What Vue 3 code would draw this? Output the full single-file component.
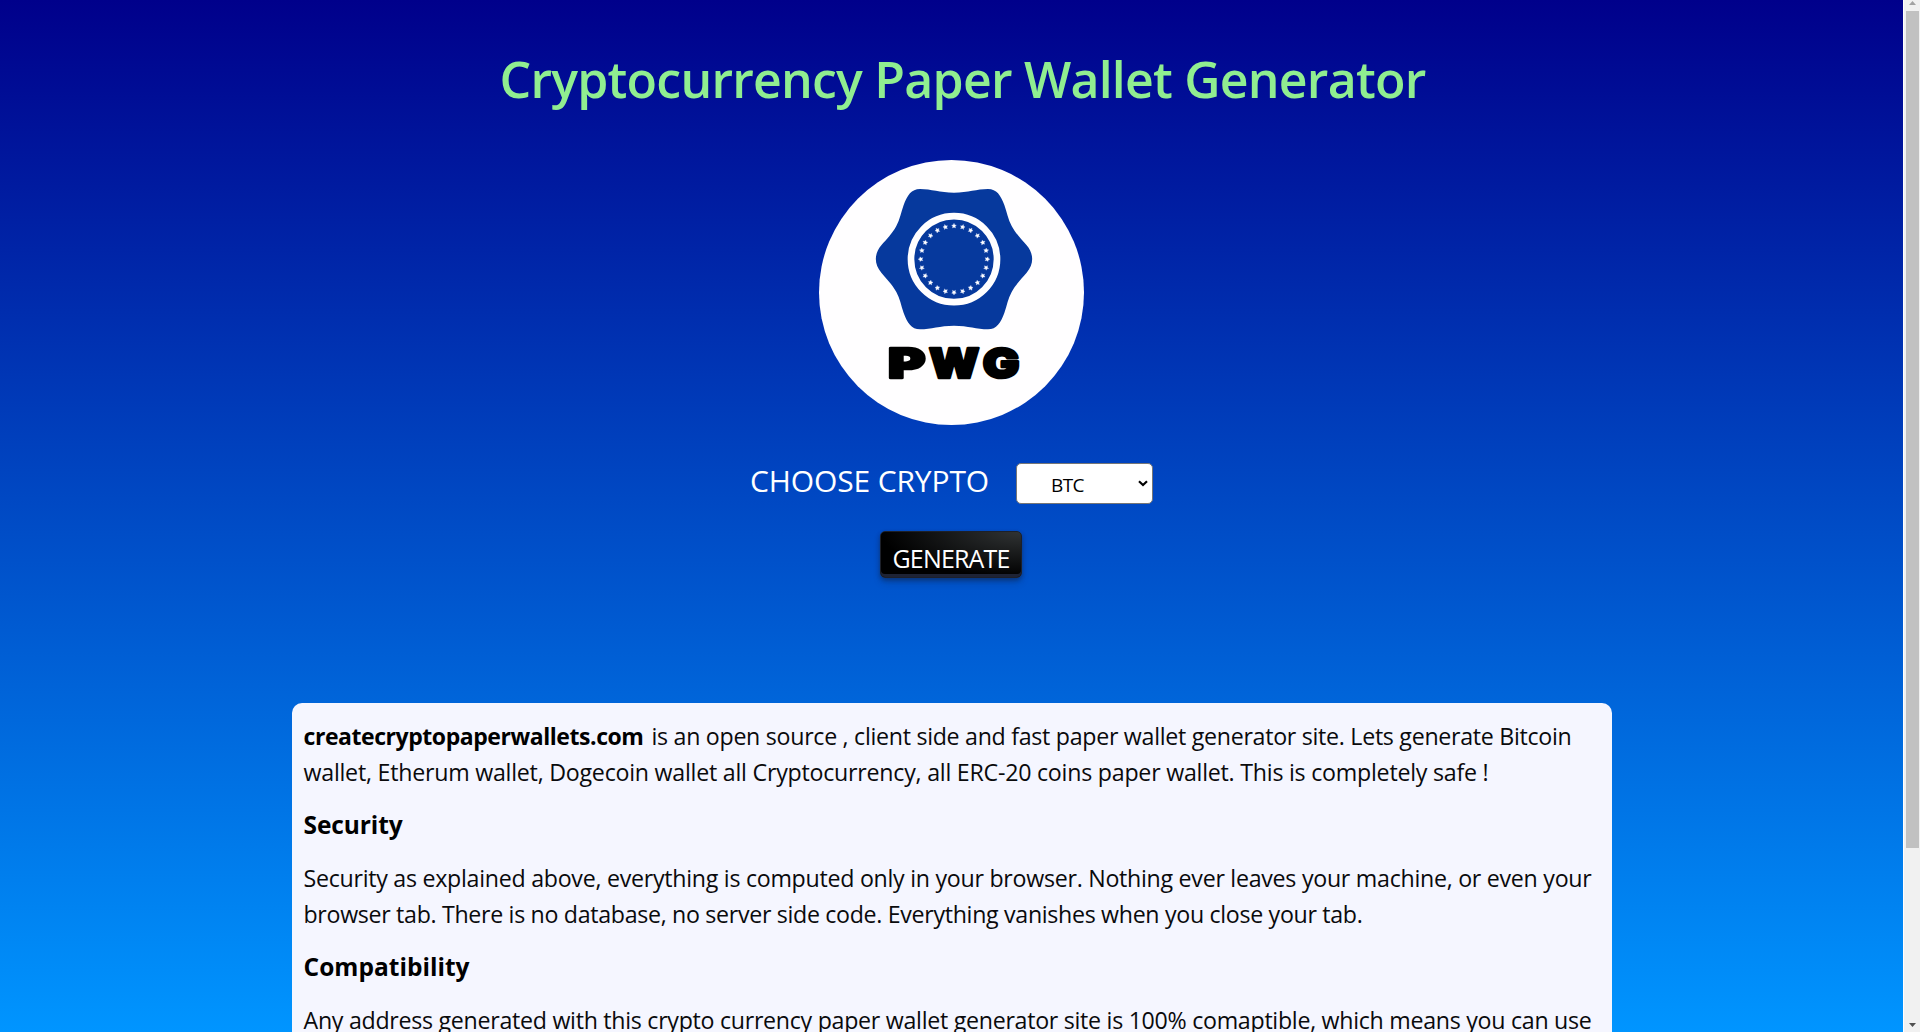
<script setup>
const stars = Array.from({ length: 24 }, (_, i) => i * 15)

const sections = [
  {
    lines: [
      [{ text: 'createcryptopaperwallets.com', width: 340, bold: true }, { text: 'is an open source , client side and fast paper wallet generator site. Lets generate Bitcoin', width: 920 }],
      [{ text: 'wallet, Etherum wallet, Dogecoin wallet all Cryptocurrency, all ERC-20 coins paper wallet. This is completely safe !', width: 1185 }],
    ],
  },
  {
    title: { text: 'Security', width: 99 },
    lines: [
      [{ text: 'Security as explained above, everything is computed only in your browser. Nothing ever leaves your machine, or even your', width: 1288 }],
      [{ text: 'browser tab. There is no database, no server side code. Everything vanishes when you close your tab.', width: 1059 }],
    ],
  },
  {
    title: { text: 'Compatibility', width: 166 },
    lines: [
      [{ text: 'Any address generated with this crypto currency paper wallet generator site is 100% comaptible, which means you can use', width: 1288 }],
    ],
  },
]

// Tracks a single line of text so that it takes up the given width.
const vFit = {
  mounted(el, { value }) {
    const natural = el.getBoundingClientRect().width
    el.style.letterSpacing = `${(value - natural) / el.textContent.length}px`
  },
}
</script>

<template>
  <div class="window">
    <main class="page">
      <h1 class="title"><span v-fit="926">Cryptocurrency Paper Wallet Generator</span></h1>

      <svg class="logo" viewBox="57 30 795 795" role="img" aria-label="PWG">
        <circle cx="454.500" cy="427.500" r="397.500" fill="#fffeff" />
        <path
          fill="#06399d"
          d="M462 128 C505 128 530 117 564 117 C590 117 602 136 613 165 C621 188 624 208 635 228 C648 252 665 268 680 286 C702 312 702 342 680 368 C665 386 648 402 635 426 C624 446 621 466 613 489 C602 518 590 538 564 538 C530 538 505 527 462 527 C419 527 394 538 360 538 C334 538 322 518 311 489 C303 466 300 446 289 426 C276 402 259 386 244 368 C222 342 222 312 244 286 C259 268 276 252 289 228 C300 208 303 188 311 165 C322 136 334 117 360 117 C394 117 419 128 462 128 Z"
        />
        <circle cx="462" cy="327.500" r="129" fill="none" stroke="#fffeff" stroke-width="20" />
        <path
          v-for="angle in stars"
          :key="angle"
          d="M462 220 L464.400 224.800 L469 225.400 L465.700 229 L466.500 234 L462 231.600 L457.500 234 L458.300 229 L455 225.400 L459.600 224.800 Z"
          :transform="`rotate(${angle} 462 327.5)`"
          fill="#fffeff"
          stroke="#dbe4fa"
          stroke-width="1"
        />
        <g class="mark">
          <text x="264" y="683" textLength="112" lengthAdjust="spacingAndGlyphs">P</text>
          <text x="387" y="683" textLength="151" lengthAdjust="spacingAndGlyphs">W</text>
          <text x="548" y="683" textLength="110" lengthAdjust="spacingAndGlyphs">G</text>
        </g>
      </svg>

      <div class="chooser">
        <label class="label" for="coin"><span v-fit="239">CHOOSE CRYPTO</span></label>
        <button id="coin" class="select" type="button">
          <span v-fit="33">BTC</span>
          <svg class="chevron" viewBox="0 0 10 7"><path d="M1 1.300 L5 5 L9 1.300" fill="none" stroke="#000" stroke-width="2.200" /></svg>
        </button>
      </div>

      <button class="generate" type="button"><span v-fit="117">GENERATE</span></button>

      <article class="panel">
        <section v-for="(section, i) in sections" :key="i" class="section">
          <h2 v-if="section.title" class="heading"><span v-fit="section.title.width">{{ section.title.text }}</span></h2>
          <p v-for="(line, j) in section.lines" :key="j" class="line">
            <span v-for="part in line" :key="part.text" v-fit="part.width" :class="{ bold: part.bold }">{{ part.text }}</span>
          </p>
        </section>
      </article>
    </main>

    <div class="scrollbar">
      <svg class="arrow" viewBox="0 0 7 4"><path d="M0 4 L3.500 0 L7 4 Z" fill="#a3a3a3" /></svg>
      <div class="thumb"></div>
      <svg class="arrow down" viewBox="0 0 7 4"><path d="M0 0 L3.500 4 L7 0 Z" fill="#505050" /></svg>
    </div>
  </div>
</template>

<style>
body {
  margin: 0;
  overflow: hidden;
}
</style>

<style scoped>
.window {
  display: flex;
  width: 100%;
  height: 1032px;
  overflow: hidden;
  font-family: "Open Sans", "Noto Sans", sans-serif;
}

.window span {
  display: inline-block;
  white-space: pre;
}

.page {
  display: flex;
  flex: 1;
  flex-direction: column;
  align-items: center;
  min-width: 0;
  overflow: hidden;
  background: linear-gradient(#00008b, #0095ff);
}

.title {
  flex: none;
  height: 80px;
  margin: 39px 0 0 22px;
  color: #90ee90;
  font-size: 50px;
  font-weight: 600;
  line-height: 80px;
}

.logo {
  flex: none;
  display: block;
  width: 265px;
  height: 265px;
  margin-top: 41px;
}

.mark {
  font-family: Inter, sans-serif;
  font-size: 123px;
  font-weight: 900;
  fill: #000;
  stroke: #000;
  stroke-width: 8;
  stroke-linejoin: round;
}

.chooser {
  flex: none;
  display: flex;
  width: 403px;
  height: 41px;
  margin-top: 38px;
}

.label {
  width: 266px;
  color: #fff;
  font-size: 30px;
  line-height: 36px;
}

.select {
  display: flex;
  align-items: center;
  justify-content: space-between;
  box-sizing: border-box;
  width: 137px;
  height: 41px;
  padding: 2px 4px 0 34px;
  border: 1px solid #767676;
  border-radius: 5px;
  background: #fff;
  color: #000;
  font: 400 19px "Open Sans", "Noto Sans", sans-serif;
}

.chevron {
  width: 10px;
  height: 7px;
  margin-bottom: 3px;
}

.generate {
  flex: none;
  box-sizing: border-box;
  width: 142px;
  height: 47px;
  margin: 27px 1px 0 0;
  padding: 6px 0 0;
  border: 1px solid #1d2029;
  border-radius: 5px;
  background: radial-gradient(100% 100% at 100% 0, #303334 0, #000 100%);
  box-shadow: rgba(20, 25, 45, 0.4) 0 2px 4px, rgba(20, 25, 45, 0.3) 0 5px 8px -2px, #1e2335 0 -3px 0 inset;
  color: #fff;
  font: 25px/38px "Open Sans", "Noto Sans", sans-serif;
}

.panel {
  flex: none;
  display: flex;
  flex-direction: column;
  gap: 17px;
  box-sizing: border-box;
  width: 1320px;
  height: 460px;
  margin-top: 125px;
  padding: 15px 12px;
  border-radius: 10px;
  background: #f5f6ff;
  color: #000;
}

.heading {
  margin: 0 0 17px;
  font-size: 24.500px;
  font-weight: 700;
  line-height: 36px;
}

.line {
  display: flex;
  gap: 8px;
  margin: 0;
  color: #0a0a0c;
  font-size: 23.200px;
  font-weight: 400;
  line-height: 36px;
}

.bold {
  color: #000;
  font-size: 23px;
  font-weight: 700;
}

.scrollbar {
  display: flex;
  flex: none;
  flex-direction: column;
  align-items: center;
  box-sizing: border-box;
  width: 17px;
  padding: 1px 0 5px;
  border-left: 1px solid #fff;
  background: #f1f1f1;
}

.arrow {
  width: 7px;
  height: 4px;
}

.thumb {
  width: 13px;
  height: 837px;
  margin-top: 6px;
  background: #c1c1c1;
}

.down {
  margin-top: auto;
}
</style>
